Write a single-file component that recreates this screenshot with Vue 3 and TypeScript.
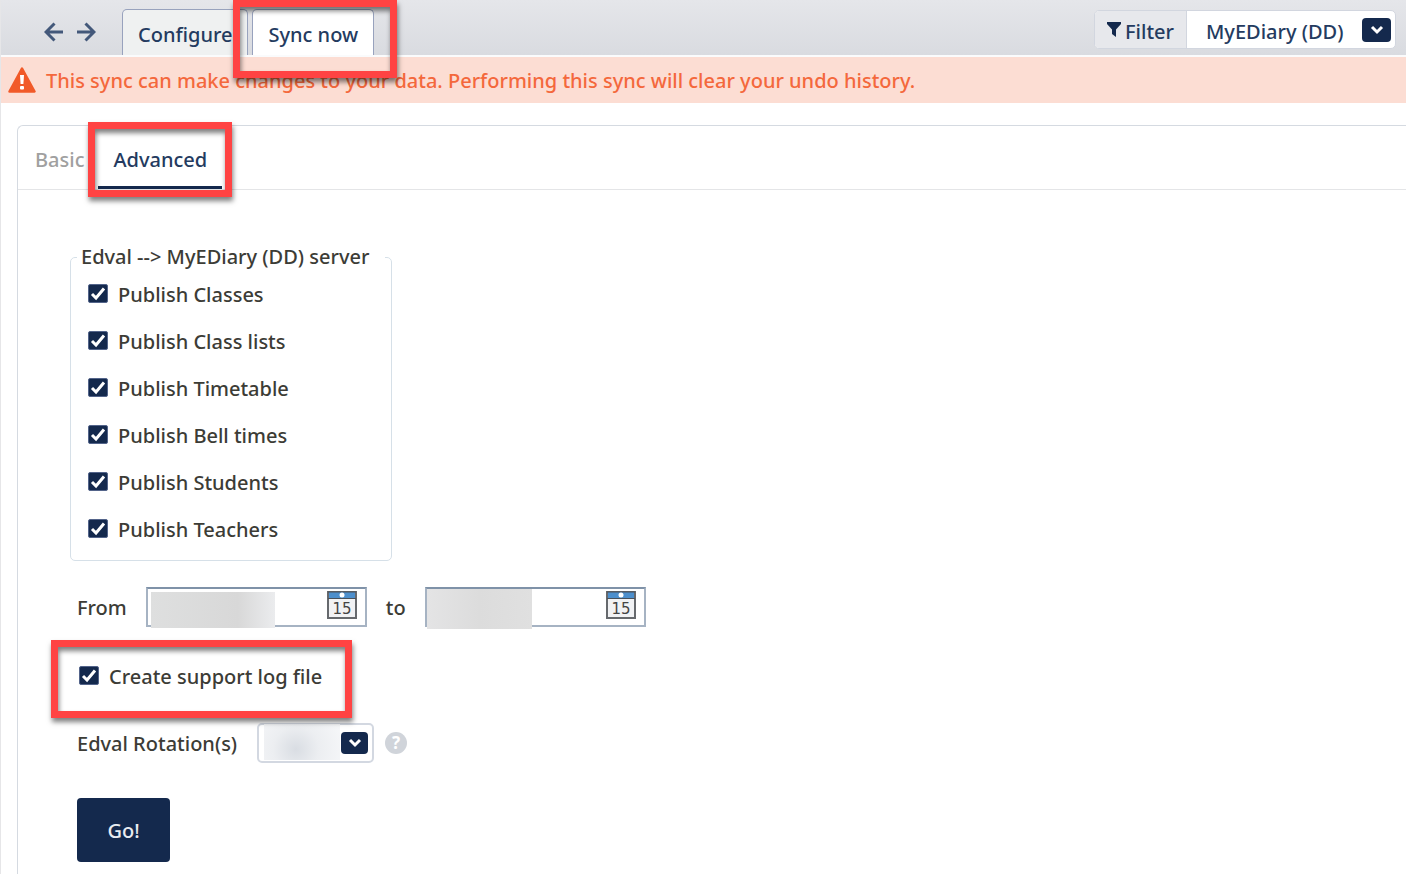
<script setup lang="ts">
import { ref } from 'vue'

interface PublishOption {
  id: string
  label: string
  checked: boolean
}

const options = ref<PublishOption[]>([
  { id: 'classes', label: 'Publish Classes', checked: true },
  { id: 'class-lists', label: 'Publish Class lists', checked: true },
  { id: 'timetable', label: 'Publish Timetable', checked: true },
  { id: 'bell-times', label: 'Publish Bell times', checked: true },
  { id: 'students', label: 'Publish Students', checked: true },
  { id: 'teachers', label: 'Publish Teachers', checked: true },
])

const createLog = ref(true)
const system = ref('MyEDiary (DD)')
const fromDate = ref('')
const toDate = ref('')
</script>

<template>
  <div class="page">
    <header class="topbar">
      <div class="history">
        <button class="icon-button" type="button" aria-label="Back">
          <svg width="20" height="20" viewBox="0 0 20 20"><path d="M19 10H2M10.500 1.500L2 10L10.500 18.500" /></svg>
        </button>
        <button class="icon-button" type="button" aria-label="Forward">
          <svg width="20" height="20" viewBox="0 0 20 20"><path d="M1 10H18M9.500 1.500L18 10L9.500 18.500" /></svg>
        </button>
      </div>
      <nav class="tabs">
        <button class="tab" type="button">Configure</button>
        <button class="tab active" type="button">
          Sync now
          <span class="frame frame-sync"></span>
        </button>
      </nav>
      <div class="filter">
        <label class="filter-label" for="system">
          <svg width="14" height="16" viewBox="0 0 14 16"><path d="M0 0H14V2L9 7.500V15L5 12V7.500L0 2Z" fill="#14294d" /></svg>
          <span>Filter</span>
        </label>
        <div class="select-wrap">
          <select id="system" v-model="system" class="system-select">
            <option>MyEDiary (DD)</option>
          </select>
          <span class="chevron chevron-system">
            <svg width="14" height="10" viewBox="0 0 14 10"><path d="M2 2L7 7L12 2" /></svg>
          </span>
        </div>
      </div>
    </header>

    <div class="alert" role="alert">
      <svg width="28" height="26" viewBox="0 0 28 26">
        <path d="M14 1.500L26.500 24.500H1.500Z" fill="#f15a29" stroke="#f15a29" stroke-width="2.500" stroke-linejoin="round" />
        <path d="M12 8H16L15.400 17H12.600Z" fill="#fff" />
        <rect x="12" y="19" width="4" height="3.500" rx="1" fill="#fff" />
      </svg>
      <span>This sync can make changes to your data. Performing this sync will clear your undo history.</span>
    </div>

    <main class="panel">
      <nav class="subtabs">
        <button class="subtab" type="button">Basic</button>
        <button class="subtab active" type="button">
          Advanced
          <span class="frame frame-advanced"></span>
        </button>
      </nav>

      <form class="form" @submit.prevent>
        <fieldset class="group">
          <legend>Edval --&gt; MyEDiary (DD) server</legend>
          <label v-for="option in options" :key="option.id" class="check">
            <input v-model="option.checked" type="checkbox" />
            <span>{{ option.label }}</span>
          </label>
        </fieldset>

        <div class="dates">
          <label for="from">From</label>
          <div class="date-box">
            <input id="from" v-model="fromDate" type="text" />
            <span class="mask mask-from"></span>
            <button class="calendar" type="button" aria-label="Pick start date">
              <svg width="30" height="28" viewBox="0 0 30 28">
                <rect x="1" y="1" width="28" height="26" fill="#f1f2f4" stroke="#66696d" stroke-width="2" />
                <rect x="2" y="1" width="26" height="6" fill="#4d8fcc" />
                <path d="M1 1H29M1 7.500H29" stroke="#4a5159" stroke-width="1" />
                <circle cx="15" cy="4" r="2.500" fill="#fff" />
                <text x="15" y="23" text-anchor="middle">15</text>
              </svg>
            </button>
          </div>
          <label for="to">to</label>
          <div class="date-box">
            <input id="to" v-model="toDate" type="text" />
            <span class="mask mask-to"></span>
            <button class="calendar" type="button" aria-label="Pick end date">
              <svg width="30" height="28" viewBox="0 0 30 28">
                <rect x="1" y="1" width="28" height="26" fill="#f1f2f4" stroke="#66696d" stroke-width="2" />
                <rect x="2" y="1" width="26" height="6" fill="#4d8fcc" />
                <path d="M1 1H29M1 7.500H29" stroke="#4a5159" stroke-width="1" />
                <circle cx="15" cy="4" r="2.500" fill="#fff" />
                <text x="15" y="23" text-anchor="middle">15</text>
              </svg>
            </button>
          </div>
        </div>

        <div class="log">
          <label class="check">
            <input v-model="createLog" type="checkbox" />
            <span>Create support log file</span>
          </label>
          <span class="frame frame-log"></span>
        </div>

        <div class="rotation">
          <label for="rotation">Edval Rotation(s)</label>
          <div class="select-wrap">
            <select id="rotation" class="rotation-select">
              <option></option>
            </select>
            <span class="mask mask-rotation"></span>
            <span class="chevron chevron-rotation">
              <svg width="14" height="10" viewBox="0 0 14 10"><path d="M2 2L7 7L12 2" /></svg>
            </span>
          </div>
          <button class="help" type="button" aria-label="Help">?</button>
        </div>

        <button class="go" type="submit">Go!</button>
      </form>
    </main>
  </div>
</template>

<style>
body {
  margin: 0;
  background: #fff;
}
</style>

<style scoped>
.page {
  display: flex;
  flex-direction: column;
  box-sizing: border-box;
  min-height: 100vh;
  overflow: hidden;
  border-left: 1px solid #e6e6e8;
  font-family: "Noto Sans", "Open Sans", sans-serif;
  font-size: 20px;
  font-weight: 500;
  line-height: 28px;
  color: #3c3c36;
}

button,
input,
select {
  box-sizing: border-box;
  margin: 0;
  padding: 0;
  border: 0;
  background: none;
  font: inherit;
  color: inherit;
}

svg {
  display: block;
}

.topbar {
  display: flex;
  align-items: flex-end;
  height: 55px;
  border-bottom: 2px solid #fafbfc;
  background: linear-gradient(#e5e6ea, #d9dbe0);
  color: #243b60;
}

.history {
  display: flex;
  gap: 12px;
  margin: 0 26px 13px 43px;
}

.icon-button path {
  fill: none;
  stroke: #43587a;
  stroke-width: 3;
}

.tabs {
  display: flex;
  gap: 4px;
}

.tab {
  position: relative;
  height: 46px;
  padding: 4px 15px 0;
  border: 1px solid #98a2bd;
  border-bottom: 0;
  border-radius: 5px 5px 0 0;
  background: #eff1f1;
}

.tab.active {
  background: #fff;
}

.frame {
  position: absolute;
  z-index: 2;
  box-sizing: border-box;
  border: 7px solid #ff4343;
  box-shadow: 1px 4px 5px rgba(0, 0, 0, 0.5), inset 1px 4px 5px rgba(0, 0, 0, 0.5);
  pointer-events: none;
}

.frame-sync {
  inset: -10px -24px -23px -20px;
}

.filter {
  display: flex;
  box-sizing: border-box;
  height: 39px;
  margin: 0 10px 6px auto;
  border: 1px solid #d2d6df;
  border-radius: 5px;
  background: #fff;
}

.filter-label {
  display: flex;
  align-items: center;
  gap: 4px;
  padding: 4px 12px 0;
  border-right: 1px solid #d2d6df;
  border-radius: 4px 0 0 4px;
  background: #e7e8ec;
}

.filter-label svg {
  margin-bottom: 4px;
}

.select-wrap {
  position: relative;
}

select {
  appearance: none;
}

.system-select {
  width: 208px;
  height: 37px;
  padding: 4px 44px 0 19px;
}

.chevron {
  position: absolute;
  display: flex;
  align-items: center;
  justify-content: center;
  border-radius: 4px;
  background: #14294d;
  pointer-events: none;
}

.chevron path {
  fill: none;
  stroke: #fff;
  stroke-width: 3;
}

.chevron-system {
  top: 7px;
  right: 4px;
  width: 29px;
  height: 24px;
}

.alert {
  display: flex;
  align-items: center;
  gap: 10px;
  height: 46px;
  padding: 0 7px;
  background: #fcddd3;
  color: #f4683c;
}

.alert span {
  padding-top: 2px;
}

.panel {
  flex: 1;
  margin: 22px 0 0 16px;
  border: 1px solid #d5dae1;
  border-width: 1px 0 0 1px;
  border-radius: 6px 0 0 0;
}

.subtabs {
  display: flex;
  gap: 14px;
  height: 63px;
  padding-left: 17px;
  border-bottom: 1px solid #e4e5e7;
}

.subtab {
  position: relative;
  padding: 4px 0 0;
  color: #a0a0a0;
}

.subtab.active {
  padding: 4px 15px 0;
  color: #243b60;
}

.subtab.active::after {
  position: absolute;
  right: 0;
  bottom: 0;
  left: 0;
  height: 3px;
  background: #14294d;
  content: "";
}

.frame-advanced {
  inset: -4px -10px -8px -10px;
}

.form {
  display: flex;
  flex-direction: column;
  align-items: flex-start;
  padding: 53px 0 12px 52px;
}

.group {
  box-sizing: border-box;
  width: 322px;
  margin: 0;
  padding: 9px 17px 5px;
  border: 1px solid #d6e0e8;
  border-radius: 5px;
}

.group legend {
  margin: 0 -12px 0 -11px;
  padding: 0 16px 0 4px;
  white-space: nowrap;
}

.check {
  display: flex;
  align-items: center;
  gap: 10px;
}

.group .check {
  height: 28px;
  margin-bottom: 19px;
}

.group .check:last-child {
  margin-bottom: 12px;
}

.check span {
  padding-top: 2px;
}

.check input {
  width: 20px;
  height: 19px;
  margin-bottom: 2px;
  appearance: none;
  border: 1px solid #53648a;
  border-radius: 2px;
  background: #14294d;
}

.check input:checked {
  background-image: url("data:image/svg+xml,%3Csvg xmlns='http://www.w3.org/2000/svg' viewBox='0 0 18 17'%3E%3Cpath d='M3 9L7 13L15 3.500' fill='none' stroke='white' stroke-width='3'/%3E%3C/svg%3E");
}

.dates {
  display: flex;
  align-items: center;
  gap: 19px;
  margin: 26px 0 0 7px;
}

.dates label {
  padding-top: 2px;
}

.date-box {
  position: relative;
}

.date-box input {
  display: block;
  width: 221px;
  height: 40px;
  padding: 0 44px 0 8px;
  border: 2px solid #a6b3c3;
  border-top-color: #7f92a8;
}

.mask {
  position: absolute;
  pointer-events: none;
}

.mask-from {
  top: 5px;
  left: 5px;
  width: 124px;
  height: 36px;
  background: linear-gradient(90deg, #dedfdf, #d8d8d8 70%, #ebecee);
}

.mask-to {
  top: 2px;
  left: 2px;
  width: 105px;
  height: 40px;
  background: linear-gradient(90deg, #e4e4e5, #dcdcdc 50%, #e0e0e0);
}

.calendar {
  position: absolute;
  top: 4px;
  right: 10px;
}

.calendar text {
  font-family: "DejaVu Sans", sans-serif;
  font-size: 15px;
  font-weight: 400;
  fill: #444;
}

.log {
  position: relative;
  margin: 34px 0 0 9px;
}

.frame-log {
  top: -21px;
  left: -28px;
  width: 301px;
  height: 78px;
}

.rotation {
  display: flex;
  align-items: center;
  margin: 32px 0 0 7px;
}

.rotation > label {
  padding-top: 2px;
}

.rotation-select {
  display: block;
  width: 117px;
  height: 40px;
  margin-left: 20px;
  border: 2px solid #d3d8e1;
  border-radius: 5px;
  background: #fff;
}

.mask-rotation {
  top: 1px;
  left: 27px;
  width: 76px;
  height: 36px;
  background: radial-gradient(circle at 42% 70%, #d9dde3, #eceef1 45%, #f6f7f9);
}

.chevron-rotation {
  top: 9px;
  right: 6px;
  width: 27px;
  height: 22px;
}

.help {
  width: 22px;
  height: 22px;
  margin-left: 11px;
  border-radius: 50%;
  background: #d0d4da;
  color: #fff;
  font-size: 17px;
  font-weight: 700;
  line-height: 22px;
}

.go {
  width: 93px;
  height: 64px;
  padding-top: 2px;
  margin: 35px 0 0 7px;
  border-radius: 4px;
  background: #14294d;
  color: #e9ecf1;
}
</style>
